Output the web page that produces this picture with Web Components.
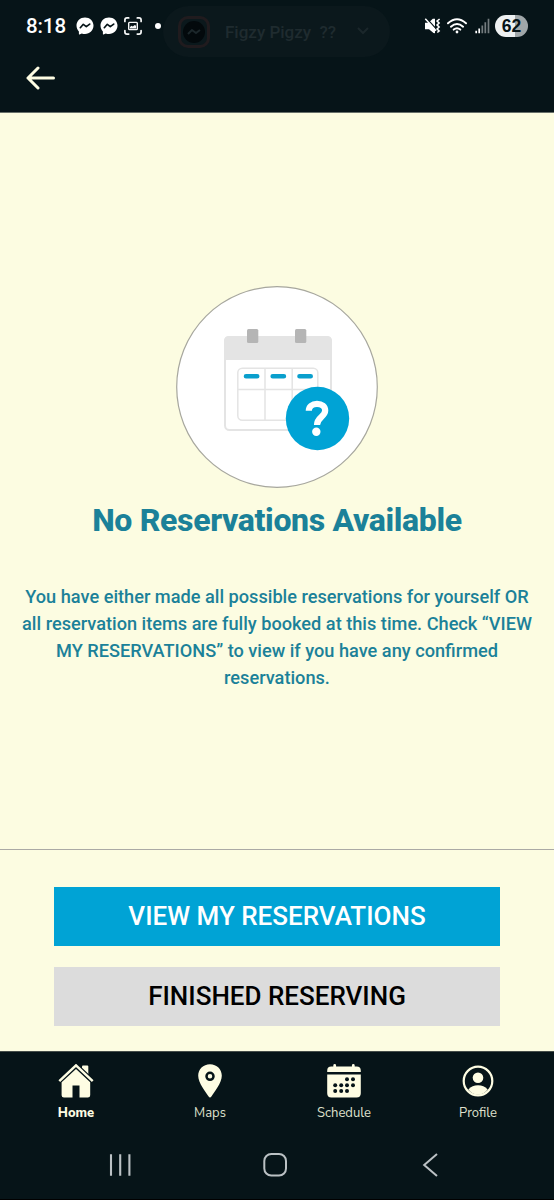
<!DOCTYPE html>
<html lang="en">
<head>
<meta charset="utf-8">
<title>Reservations</title>
<style>
html,body{margin:0;height:1200px;background:#061418}
body{font-family:Roboto,"Liberation Sans",sans-serif;overflow:hidden}
</style>
</head>
<body>
<reservation-app></reservation-app>
<script>
const define = (name, html) => customElements.define(name, class extends HTMLElement {
  constructor() {
    super();
    const t = document.createElement('template');
    t.innerHTML = html;
    this.attachShadow({ mode: 'open' }).append(t.content.cloneNode(true));
  }
});

const icons = {
  messenger: [18, 18, `<path d="M9 .4C4.200.4.500 3.900.500 8.500c0 2.400 1 4.400 2.400 5.900v2.700q0 .6.600.3l2.300-1q1.500.5 3.200.5c4.800 0 8.500-3.600 8.500-8.300S13.800.4 9 .4Z" fill="#fff"/><path d="m4.300 10.700 3-3.400 3 2.300 3.400-2.500" fill="none" stroke="#061418" stroke-width="1.700" stroke-linejoin="round" stroke-linecap="round"/>`],
  capture: [18, 18, `<g fill="none" stroke="#f7f9f9" stroke-width="1.700" stroke-linecap="round"><path d="M.9 4.500V3Q.9.900 3 .900h1.700M13.300.9H15q2.100 0 2.100 2.100v1.500M17.100 13.500V15q0 2.100-2.100 2.100h-1.700M4.700 17.100H3Q.9 17.100.9 15v-1.500"/><rect x="4.700" y="5.400" width="8.600" height="7.200" rx=".8" stroke-width="1.400"/></g><path d="m6 11.500 0-1.500 1.500-1.200 1.300.8 2-1.700L12 8.800v2.700Z" fill="#f7f9f9"/>`],
  mute: [17, 16, `<path d="M1 4.700h3.600L8.800.8H11v14.400L9.500 15 5 11.200H1Z" fill="#fff"/><path d="m2.200 0 11 12" stroke="#061418" stroke-width="1.300"/><path d="m1.300.7 10.700 12" stroke="#fff" stroke-width="1.500"/><path d="m15.600 1-2.500 2 2 2-2 2 2 2-2 2 2 2-1.800 1.500" fill="none" stroke="#fff" stroke-width="1.600"/>`],
  wifi: [20, 16, `<g fill="none" stroke="#fff" stroke-width="2" stroke-linecap="round"><path d="M1 5.300Q10-2.800 19 5.300"/><path d="M3.900 8.700Q10 3.300 16.100 8.700"/><path d="M6.700 11.600Q10 8.900 13.300 11.600"/></g><circle cx="10" cy="14" r="1.400" fill="#fff"/>`],
  signal: [15, 16, `<path d="M1.200 12.800v2.400M4.200 10.500v4.700" stroke="#fff" stroke-width="1.700"/><path d="M7.300 7.500v7.700M10.300 4.200v11M13.500.8v14.400" stroke="#737b7e" stroke-width="1.700"/>`],
  back: [30, 24, `<path d="M27.500 12H2M12 2 2 12l10 10" fill="none" stroke="#fefde3" stroke-width="3" stroke-linecap="round" stroke-linejoin="round"/>`],
  home: [36, 35, `<path d="M24 3.700V2.400q0-1 1-1h4.300q1 0 1 1v10.700L24 7Z" fill="#fefde3"/><path d="m1.300 17.400L18 1.500l16.700 15.900" fill="none" stroke="#061418" stroke-width="5"/><path d="m1.300 17.100L18 1.400l16.700 15.700" fill="none" stroke="#fefde3" stroke-width="2.500"/><path d="M18 4.900 32.200 18.300V31.200q0 2.400-2.400 2.400H21.500v-12h-7v12H6q-2.400 0-2.400-2.400V18.300Z" fill="#fefde3"/>`],
  pin: [24, 34, `<path d="M12 .2C5.200.2.200 5.300.200 11.800c0 7.500 7.800 16.500 10.400 20.800q1.400 1.900 2.800 0c2.600-4.300 10.400-13.300 10.400-20.800C23.800 5.300 18.800.2 12 .2Z" fill="#fefde3"/><circle cx="12" cy="12.300" r="3.500" fill="none" stroke="#061418" stroke-width="2.500"/>`],
  schedule: [34, 34, `<path d="M.2 8.100V6.700Q.2 2.600 4.300 2.600h2V1.500q0-1.400 1.400-1.400t1.400 1.400v1.100h15.800V1.500q0-1.400 1.400-1.400t1.400 1.400v1.100h2q4.100 0 4.100 4.100v1.400ZM.2 10.500h33.600v18.700q0 4.200-4.200 4.200H4.400Q.2 33.400.2 29.200Z" fill="#fefde3"/><g fill="#061418"><circle cx="20" cy="15.300" r="2"/><circle cx="26" cy="15.300" r="2"/><circle cx="8.200" cy="21.200" r="2"/><circle cx="14.200" cy="21.200" r="2"/><circle cx="20" cy="21.200" r="2"/><circle cx="26" cy="21.200" r="2"/><circle cx="8.200" cy="27" r="2"/><circle cx="14.200" cy="27" r="2"/><circle cx="20" cy="27" r="2"/></g>`],
  profile: [32, 32, `<circle cx="16" cy="16" r="14.300" fill="none" stroke="#fefde3" stroke-width="2.200"/><circle cx="16" cy="12.700" r="5.300" fill="#fefde3"/><path d="M6.300 24.600C9 21.300 12 20.200 16 20.200s7 1.100 9.700 4.400Q21.500 29.800 16 29.800T6.300 24.600Z" fill="#fefde3"/>`],
  recents: [24, 26, `<path d="M2 2.300v21.500M11.200 2.300v21.500M20.400 2.300v21.500" stroke="#bbc1c4" stroke-width="2.100"/>`],
  square: [26, 26, `<rect x="2.300" y="2" width="21.700" height="21.600" rx="7" fill="none" stroke="#bbc1c4" stroke-width="2"/>`],
  chevron: [16, 26, `<path d="M15 2 2.200 13 15 24" fill="none" stroke="#bbc1c4" stroke-width="2"/>`]
};
customElements.define('ui-icon', class extends HTMLElement {
  constructor() {
    super();
    this.attachShadow({ mode: 'open' });
  }
  connectedCallback() {
    const [w, h, body] = icons[this.getAttribute('name')];
    this.shadowRoot.innerHTML = `<style>:host{display:block;flex:none;width:${w}px;height:${h}px}svg{display:block}</style><svg width="${w}" height="${h}" viewBox="0 0 ${w} ${h}">${body}</svg>`;
  }
});

define('chat-toast', `<style>
:host{position:absolute;left:163px;top:6px;width:227px;height:51px;border-radius:26px;background:#0b181c;display:flex;align-items:center;box-sizing:border-box;padding-left:15px;color:#1f2b2f;font:500 17px Roboto,sans-serif;white-space:pre}
i{width:26px;height:26px;border:3px solid #201b1e;border-radius:10px;display:grid;place-items:center;margin-right:15px;background:#0b181c}
svg{display:block}.chev{margin-left:20px}
</style><i><svg width="24" height="24" viewBox="0 0 24 24"><circle cx="12" cy="12" r="11" fill="#03090c"/><path d="m6 14 4-4 4 3 4-3" fill="none" stroke="#1c272b" stroke-width="2"/></svg></i><span><slot></slot></span><svg class="chev" width="14" height="9" viewBox="0 0 14 9"><path d="m2 1 5 5 5-5" fill="none" stroke="#1b272b" stroke-width="2"/></svg>`);

define('battery-pill', `<style>
:host{display:grid;place-items:center;width:33px;height:22px;border-radius:11px;background:linear-gradient(90deg,#eef1f2 0 20px,#a0a7a9 20px);color:#061418;font:700 17.500px/22px "Liberation Sans",sans-serif}
</style><slot></slot>`);

define('status-bar', `<style>
:host{display:flex;position:relative;height:52px;align-items:center;padding:0 26px;color:#fff;font:500 20.500px/24px Roboto,sans-serif}
time{width:50px;letter-spacing:-.1px}
.dot{width:6px;height:6px;border-radius:50%;background:#fff;margin-left:13px}
ui-icon+ui-icon{margin-left:6px}
.right{margin-left:auto;display:flex;align-items:center}
.right ui-icon+ui-icon{margin-left:7px}
.right ui-icon:nth-of-type(2){margin-left:6px;margin-right:1px}
battery-pill{margin-left:5px}
</style><time>8:18</time><ui-icon name="messenger"></ui-icon><ui-icon name="messenger"></ui-icon><ui-icon name="capture"></ui-icon><span class="dot"></span><chat-toast>Figzy Pigzy  ??</chat-toast><div class="right"><ui-icon name="mute"></ui-icon><ui-icon name="wifi"></ui-icon><ui-icon name="signal"></ui-icon><battery-pill>62</battery-pill></div>`);

define('app-header', `<style>
:host{display:block;height:112px;background:#061418;border-bottom:1px solid #68706a;box-sizing:content-box}
.nav{padding:14px 0 0 26px}
</style><status-bar></status-bar><div class="nav"><ui-icon name="back"></ui-icon></div>`);

define('calendar-art', `<style>:host{display:block;width:202px;height:202px}svg{display:block}</style>
<svg width="202" height="202" viewBox="0 0 202 202">
<circle cx="101" cy="101" r="100.300" fill="#fff" stroke="#a7a79e" stroke-width="1.200"/>
<rect x="49" y="51" width="106" height="93" rx="4.500" fill="#fff" stroke="#e4e4e4" stroke-width="2"/>
<path d="M48 74V55q0-5 5-5h98q5 0 5 5v19Z" fill="#e4e4e4"/>
<rect x="71" y="43" width="11.300" height="14" rx="1.500" fill="#b5b5b5"/><rect x="119" y="43" width="11.300" height="14" rx="1.500" fill="#b5b5b5"/>
<g fill="none" stroke="#e4e4e4" stroke-width="1.500"><rect x="61.800" y="82.200" width="80" height="52" rx="4.500"/><path d="M89 82v52M116.200 82v52M62 103.500h80"/></g>
<path d="M70 90.300h11.200M96.700 90.300h11.200M123.500 90.300h11.200" stroke="#0a9fcd" stroke-width="4.600" stroke-linecap="round"/>
<circle cx="141.500" cy="132.500" r="31.700" fill="#00a3d5"/>
<path d="M132.800 124.800c0-4 3.300-7 8.200-7 5 0 8.200 2.600 8.200 6.800 0 6.200-8.200 6.600-8.200 14.400" fill="none" stroke="#fff" stroke-width="6.200"/><circle cx="140.300" cy="145.800" r="4.200" fill="#fff"/>
</svg>`);

define('empty-state', `<style>
:host{display:flex;flex-direction:column;align-items:center;height:736px;box-sizing:border-box;padding-top:173px;color:#1b8199;text-align:center}
h1{margin:12px 0 0;font:800 32px/40px Roboto,sans-serif;letter-spacing:-.34px;white-space:nowrap}
p{margin:43px 0 0;font:500 18.180px/27.100px Roboto,sans-serif;white-space:nowrap}
</style><calendar-art></calendar-art><h1><slot name="title"></slot></h1><p><slot></slot></p>`);

define('action-button', `<style>
:host{display:block;height:59px}
button{display:block;width:100%;height:59px;border:0;padding:0;background:var(--bg);color:var(--fg);font:500 26px/57px Roboto,sans-serif;white-space:nowrap}
</style><button><slot></slot></button>`);

define('action-panel', `<style>
:host{display:flex;flex-direction:column;gap:21px;border-top:1px solid #aaa9a5;height:202px;box-sizing:border-box;padding:37px 54px 0}
</style><slot></slot>`);

define('tab-item', `<style>
:host{display:flex;flex-direction:column;align-items:center;width:134px;color:#dfe0cd;font:400 13px/18px "Nunito Sans",Lato,sans-serif}
:host([active]){font-weight:800;color:#fefde3}
div{height:34px;display:grid;place-items:center;margin-bottom:6px}
</style><div><slot name="icon"></slot></div><span><slot></slot></span>`);

define('tab-bar', `<style>
:host{display:flex;height:85px;box-sizing:border-box;padding:12px 9px 0;background:#061418;border-top:1px solid #454d49}
</style><tab-item active><ui-icon slot="icon" name="home"></ui-icon>Home</tab-item><tab-item><ui-icon slot="icon" name="pin"></ui-icon>Maps</tab-item><tab-item><ui-icon slot="icon" name="schedule"></ui-icon>Schedule</tab-item><tab-item><ui-icon slot="icon" name="profile"></ui-icon>Profile</tab-item>`);

define('system-nav', `<style>
:host{display:flex;height:64px;box-sizing:border-box;border-bottom:1px solid #000;padding:16px 0 0 109px;background:#061418}
ui-icon:nth-of-type(2){margin-left:129px}ui-icon:nth-of-type(3){margin-left:134px}
</style><ui-icon name="recents"></ui-icon><ui-icon name="square"></ui-icon><ui-icon name="chevron"></ui-icon>`);

define('reservation-app', `<style>
:host{display:flex;flex-direction:column;width:554px;height:1200px;background:#fcfce1}
.primary{--bg:#00a3d5;--fg:#fff}.secondary{--bg:#dcdcdc;--fg:#000}
</style><app-header></app-header>
<empty-state><span slot="title">No Reservations Available</span>You have either made all possible reservations for yourself OR<br>all reservation items are fully booked at this time. Check “VIEW<br>MY RESERVATIONS” to view if you have any confirmed<br>reservations.</empty-state>
<action-panel><action-button class="primary">VIEW MY RESERVATIONS</action-button><action-button class="secondary">FINISHED RESERVING</action-button></action-panel>
<tab-bar></tab-bar><system-nav></system-nav>`);
</script>
</body>
</html>
